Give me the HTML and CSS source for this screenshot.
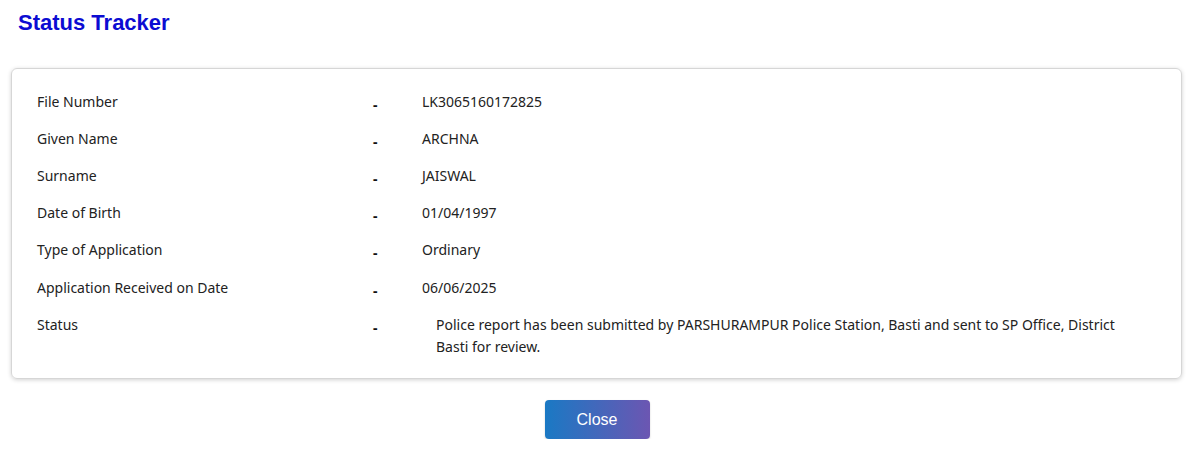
FILE: index.html
```html
<!DOCTYPE html>
<html>
<head>
<meta charset="utf-8">
<link rel="stylesheet" href="styles.css">
</head>
<body>
<div class="page">
  <h1 class="title">Status Tracker</h1>
  <div class="card">
    <div class="row"><div class="label">File Number</div><div class="dash">-</div><div class="value">LK3065160172825</div></div>
    <div class="row"><div class="label">Given Name</div><div class="dash">-</div><div class="value">ARCHNA</div></div>
    <div class="row"><div class="label">Surname</div><div class="dash">-</div><div class="value">JAISWAL</div></div>
    <div class="row"><div class="label">Date of Birth</div><div class="dash">-</div><div class="value">01/04/1997</div></div>
    <div class="row"><div class="label">Type of Application</div><div class="dash">-</div><div class="value">Ordinary</div></div>
    <div class="row"><div class="label">Application Received on Date</div><div class="dash">-</div><div class="value">06/06/2025</div></div>
    <div class="row"><div class="label">Status</div><div class="dash">-</div><div class="value status">Police report has been submitted by PARSHURAMPUR Police Station, Basti and sent to SP Office, District Basti for review.</div></div>
  </div>
  <div class="actions">
    <button class="close-btn">Close</button>
  </div>
</div>
</body>
</html>
```
FILE: styles.css
```css
html, body {
  margin: 0;
  padding: 0;
  background: #ffffff;
}
.page {
  padding: 0 18px 0 11px;
  font-family: "Noto Sans", "Open Sans", sans-serif;
  color: #222;
}
.title {
  margin: 0;
  padding: 10px 0 0 7px;
  height: 68px;
  box-sizing: border-box;
  font-family: "Liberation Sans", Arial, sans-serif;
  font-weight: bold;
  font-size: 22px;
  line-height: 26px;
  color: #0c0cd2;
}
.card {
  width: 1171px;
  box-sizing: border-box;
  border: 1px solid #d6d6d6;
  border-radius: 6px;
  box-shadow: 0 1px 4px rgba(0,0,0,0.18);
  padding: 14px 26px 13px 25px;
}
.row {
  display: grid;
  grid-template-columns: 336px 49px 1fr;
  padding: 7.6px 0;
  font-size: 14px;
  line-height: 22px;
}
.label {
  color: #222;
}
.dash {
  font-weight: bold;
  position: relative;
  top: 3px;
  color: #111;
}
.value {
  color: #222;
}
.value.status {
  padding-left: 14px;
  padding-right: 24px;
}
.actions {
  display: flex;
  justify-content: center;
  padding-top: 21px;
  padding-left: 1px;
  padding-right: 0;
}
.close-btn {
  width: 105px;
  height: 39px;
  border: none;
  border-radius: 4px;
  background: linear-gradient(90deg, #1a79c4 0%, #6c56b2 100%);
  color: #fff;
  font-family: "Liberation Sans", Arial, sans-serif;
  font-size: 16px;
  box-shadow: 0 1px 2px rgba(0,0,0,0.2);
}
```
